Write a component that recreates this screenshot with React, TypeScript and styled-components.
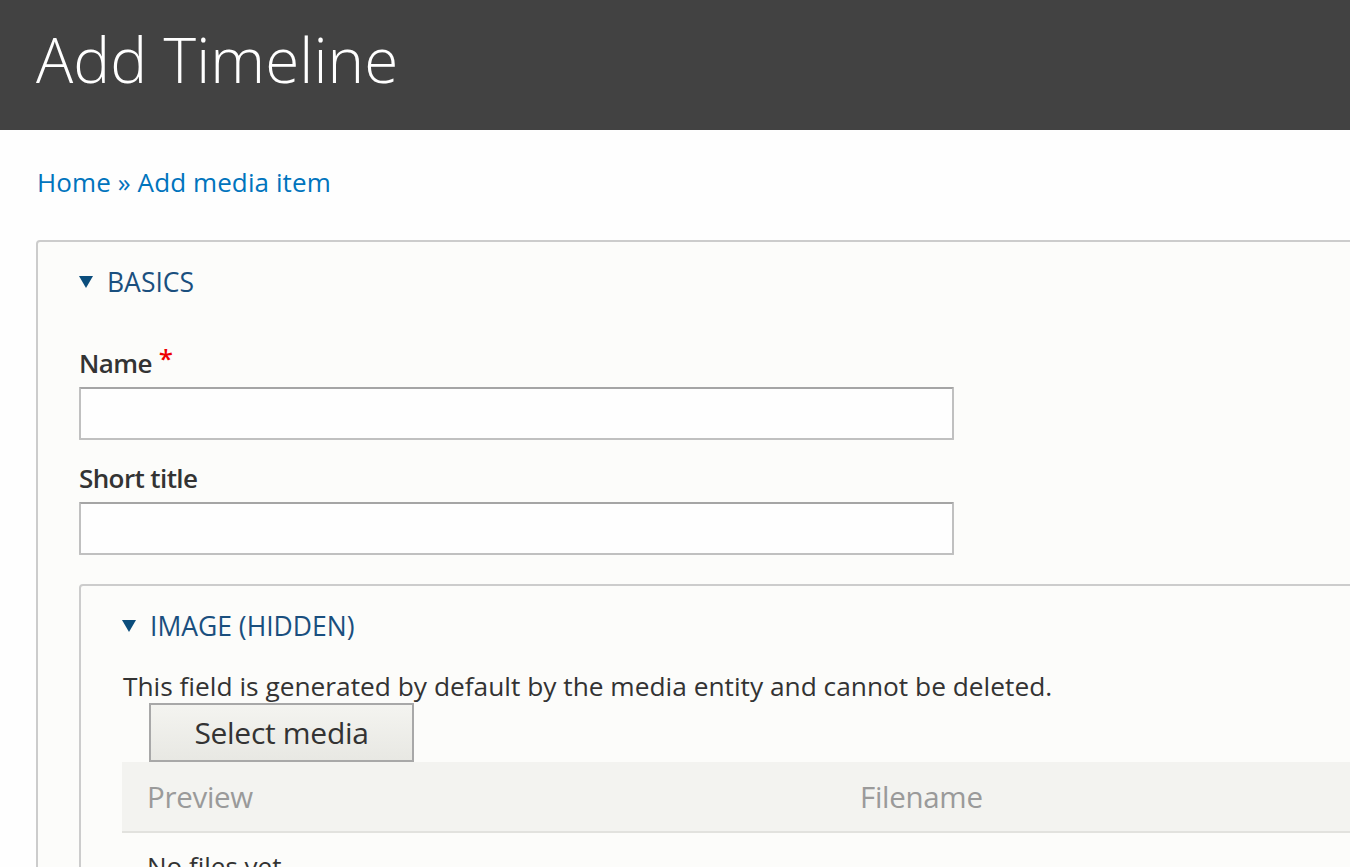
import React from "react";
import styled, { createGlobalStyle } from "styled-components";

const Global = createGlobalStyle`
  html, body { margin: 0; padding: 0; }
  body {
    background: #fefefe;
    font-family: "Open Sans", "Noto Sans", "Liberation Sans", sans-serif;
    color: #333;
    overflow: hidden;
  }
  #root { width: 1350px; height: 867px; overflow: hidden; }
`;

const Header = styled.header`
  background: #424242;
  height: 130px;
  padding-left: 36px;
  display: flex;
  align-items: center;
  box-sizing: border-box;
`;

const Title = styled.h1`
  margin: 0;
  color: #fff;
  font-weight: 300;
  font-size: 62px;
  letter-spacing: 0.1px;
  line-height: 1;
  transform: translateY(-6px);
`;

const Main = styled.main`
  padding: 36px 0 0 37px;
`;

const Breadcrumb = styled.nav`
  font-size: 26px;
  color: #0074bd;
  line-height: 32px;
  letter-spacing: 0.1px;
  margin-bottom: 42px;
  a { color: inherit; text-decoration: none; }
`;

const Fieldset = styled.section<{ $nested?: boolean }>`
  width: 1500px;
  box-sizing: border-box;
  background: #fcfcfa;
  border: 2px solid #cccccc;
  border-radius: 4px;
  padding: 25px 0 0 41px;
  margin: ${(p) => (p.$nested ? "29px 0 0 0" : "0 0 0 -1px")};
  min-height: ${(p) => (p.$nested ? "320px" : "700px")};
`;

const Legend = styled.div<{ $gap: number }>`
  display: flex;
  align-items: center;
  gap: 14px;
  color: #1a4f7e;
  font-size: 26.5px;
  text-transform: uppercase;
  height: 30px;
  margin-bottom: ${(p) => p.$gap}px;
  svg { width: 14px; height: 12px; flex: none; }
`;

const Field = styled.div`
  margin-bottom: 21px;
`;

const Label = styled.label`
  display: flex;
  align-items: flex-start;
  gap: 7px;
  font-size: 26px;
  font-weight: 600;
  color: #333;
  line-height: 34px;
  letter-spacing: -0.6px;
  margin-bottom: 7px;
`;

const Req = styled.span`
  color: #e00;
  font-size: 26px;
  line-height: 24px;
`;

const Input = styled.input`
  display: block;
  width: 875px;
  height: 53px;
  box-sizing: border-box;
  border: 2px solid #c0c0c0;
  border-top-color: #a5a5a5;
  background: #fefefe;
  border-radius: 1px;
  font-size: 22px;
  padding: 0 10px;
  outline: none;
`;

const Description = styled.div`
  font-size: 26.3px;
  color: #333;
  line-height: 34px;
  margin-left: 1px;
  white-space: nowrap;
`;

const Button = styled.button`
  display: block;
  margin: 0 0 0 27px;
  width: 265px;
  height: 59px;
  box-sizing: border-box;
  border: 2px solid #a8a8a8;
  background: linear-gradient(#f4f4f0, #e8e8e3);
  font-family: inherit;
  font-size: 30px;
  color: #333;
  letter-spacing: -0.3px;
  padding: 0;
  cursor: pointer;
`;

const Table = styled.div`
  display: flex;
  flex-direction: column;
`;

const HeadRow = styled.div`
  display: grid;
  grid-template-columns: 713px 1fr;
  height: 71px;
  box-sizing: border-box;
  align-items: center;
  background: #f3f3f0;
  border-bottom: 2px solid #e2e2de;
  padding-left: 25px;
`;

const Th = styled.div`
  font-size: 29.5px;
  color: #9a9a9a;
  letter-spacing: -0.3px;
`;

const BodyRow = styled.div`
  padding: 16px 0 0 25px;
  font-size: 26px;
  line-height: 34px;
  color: #333;
`;

const Triangle = () => (
  <svg viewBox="0 0 14 12">
    <path d="M0 0 H14 L7 12 Z" fill="#0b4d7c" />
  </svg>
);

export default function App() {
  return (
    <>
      <Global />
      <Header>
        <Title>Add Timeline</Title>
      </Header>
      <Main>
        <Breadcrumb>
          <a href="#">Home</a> » <a href="#">Add media item</a>
        </Breadcrumb>
        <Fieldset>
          <Legend $gap={49}>
            <Triangle />
            <span>Basics</span>
          </Legend>
          <Field>
            <Label>
              Name <Req>*</Req>
            </Label>
            <Input />
          </Field>
          <Field>
            <Label>Short title</Label>
            <Input />
          </Field>
          <Fieldset $nested>
            <Legend $gap={28}>
              <Triangle />
              <span>Image (hidden)</span>
            </Legend>
            <Description>
              This field is generated by default by the media entity and cannot be deleted.
            </Description>
            <Button>Select media</Button>
            <Table>
              <HeadRow>
                <Th>Preview</Th>
                <Th>Filename</Th>
              </HeadRow>
              <BodyRow>No files yet.</BodyRow>
            </Table>
          </Fieldset>
        </Fieldset>
      </Main>
    </>
  );
}
